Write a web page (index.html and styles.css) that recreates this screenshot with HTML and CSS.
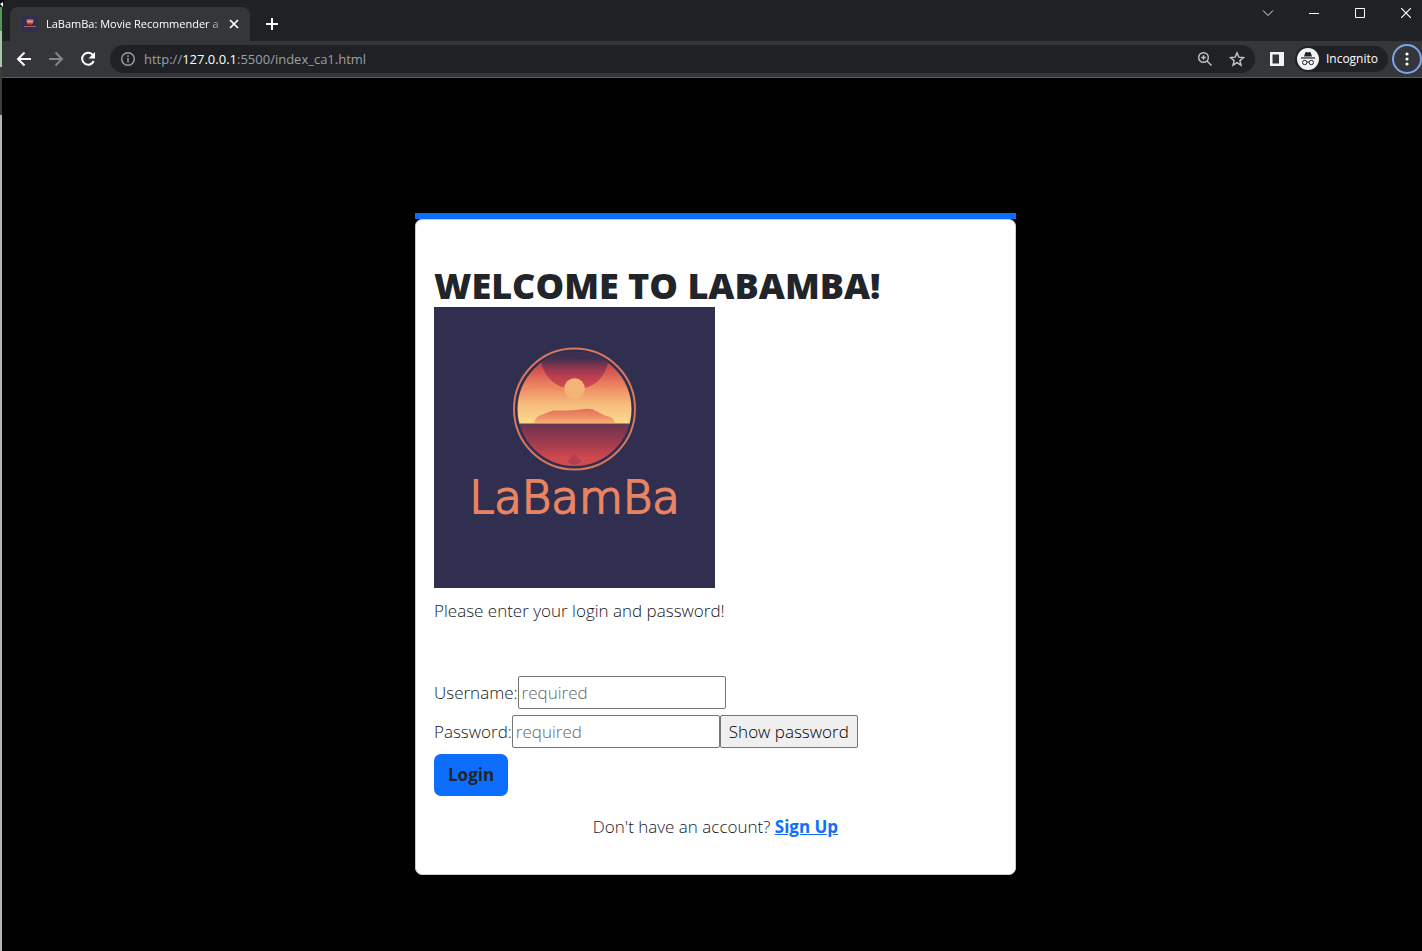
FILE: index.html
```html
<!DOCTYPE html>
<html lang="en">
<head>
<meta charset="utf-8">
<title>LaBamBa: Movie Recommender</title>
<link rel="stylesheet" href="styles.css">
</head>
<body>
<div class="desktop">
  <div class="backdrop">
    <svg class="pointer" width="4" height="8" viewBox="0 0 4 8" aria-hidden="true"><path d="M0 0h4v3H2v4H0z" fill="#000"/><path d="M0 4l3-2v5z" fill="#fff"/></svg>
  </div>
  <div class="window">
    <header class="tabstrip">
      <div class="tab">
        <svg class="favicon" width="16" height="16" viewBox="0 0 16 16" aria-hidden="true">
          <rect width="16" height="16" fill="#312f4f"/>
          <path d="M4.500 3h7v2.500q0 2-2 3h-3q-2-1-2-3z" fill="#c0444f"/>
          <path d="M5 4.500h6v2H5z" fill="#f0a070"/>
          <path d="M2 10.500h12" stroke="#a5605c"/>
        </svg>
        <span class="tab-title">LaBamBa: Movie Recommender a</span>
        <button class="tab-close" aria-label="Close tab"><svg width="10" height="10" viewBox="0 0 10 10"><path d="M1 1l8 8M9 1l-8 8" stroke="#fff" stroke-width="1.700"/></svg></button>
      </div>
      <button class="new-tab" aria-label="New tab"><svg width="12" height="12" viewBox="0 0 12 12"><path d="M6 0v12M0 6h12" stroke="#fff" stroke-width="2"/></svg></button>
      <div class="controls">
        <button aria-label="Search tabs"><svg width="12" height="12" viewBox="0 0 12 12"><path d="M1 3.500l5 5 5-5" fill="none" stroke="#e8e8e8"/></svg></button>
        <button aria-label="Minimize"><svg width="10" height="10" viewBox="0 0 10 10"><path d="M0 5.500h10" stroke="#fff"/></svg></button>
        <button aria-label="Maximize"><svg width="10" height="10" viewBox="0 0 10 10"><path d="M.5.5h9v9h-9z" fill="none" stroke="#fff"/></svg></button>
        <button aria-label="Close"><svg width="10" height="10" viewBox="0 0 10 10"><path d="M0 0l10 10M10 0L0 10" stroke="#fff" stroke-width="1.200"/></svg></button>
      </div>
    </header>
    <nav class="toolbar" aria-label="Browser toolbar">
      <button class="tool" aria-label="Back"><svg width="16" height="16" viewBox="0 0 16 16"><path d="M15 8H2M8.500 1.500L2 8l6.500 6.500" fill="none" stroke="#fff" stroke-width="2"/></svg></button>
      <button class="tool" aria-label="Forward"><svg width="16" height="16" viewBox="0 0 16 16"><path d="M1 8h13M7.500 1.500L14 8l-6.500 6.500" fill="none" stroke="#85868a" stroke-width="2"/></svg></button>
      <button class="tool" aria-label="Reload"><svg width="16" height="16" viewBox="0 0 16 16"><path d="M13 4.200A6 6 0 1 0 13.700 10" fill="none" stroke="#fff" stroke-width="2"/><path d="M15 1v6.500H8.500z" fill="#fff"/></svg></button>
      <div class="omnibox">
        <svg width="16" height="16" viewBox="0 0 16 16" aria-hidden="true"><circle cx="8" cy="8" r="6.300" fill="none" stroke="#9aa0a6" stroke-width="1.400"/><path d="M8 7v4.500M8 4.300v1.600" stroke="#9aa0a6" stroke-width="1.500"/></svg>
        <span class="address">http://<b>127.0.0.1</b>:5500/index_ca1.html</span>
        <button class="omni-button" aria-label="Zoom"><svg width="16" height="16" viewBox="0 0 16 16"><g fill="none" stroke="#c4c7c9" stroke-width="1.400"><circle cx="6.500" cy="6.500" r="4.800"/><path d="M10 10l4.500 4.500M6.500 4.200v4.600M4.200 6.500h4.600"/></g></svg></button>
        <button class="omni-button" aria-label="Bookmark this page"><svg width="16" height="16" viewBox="0 0 16 16"><path d="M8 1.800l1.800 4.300 4.700.4-3.600 3.100 1.100 4.600L8 11.700l-4 2.500 1.100-4.600L1.500 6.500l4.700-.4z" fill="none" stroke="#c4c7c9" stroke-width="1.400"/></svg></button>
      </div>
      <button class="panel" aria-label="Side panel"><svg width="14" height="14" viewBox="0 0 14 14"><path d="M0 0h14v14H0zM2.500 2.500v9H9v-9z" fill="#f1f3f4" fill-rule="evenodd"/></svg></button>
      <button class="incognito">
        <svg width="22" height="22" viewBox="0 0 22 22" aria-hidden="true"><circle cx="11" cy="11" r="11" fill="#f1f3f4"/><path d="M7 8.500l1.300-4q.3-.7 1-.4l1.700.5 1.700-.5q.7-.3 1 .4l1.300 4z" fill="#202124"/><path d="M4 10h14" stroke="#202124" stroke-width="1.200"/><g fill="none" stroke="#202124"><circle cx="7.700" cy="14.500" r="2.200"/><circle cx="14.300" cy="14.500" r="2.200"/><path d="M10 14.200q1-.6 2 0"/></g></svg>
        Incognito
      </button>
      <button class="menu" aria-label="Menu"><svg width="4" height="14" viewBox="0 0 4 14"><g fill="#fff"><circle cx="2" cy="2" r="1.600"/><circle cx="2" cy="7" r="1.600"/><circle cx="2" cy="12" r="1.600"/></g></svg></button>
    </nav>
    <main class="page">
      <section class="login">
        <div class="card">
          <h1>Welcome to LaBamBa!</h1>
          <svg class="logo" viewBox="0 0 281 281" role="img" aria-label="LaBamBa">
            <defs>
              <linearGradient id="sky" x1="0" y1="0" x2="0" y2="1"><stop offset="0" stop-color="#a83250"/><stop offset=".22" stop-color="#d04c50"/><stop offset=".5" stop-color="#ef8c62"/><stop offset=".72" stop-color="#f6bb7c"/><stop offset="1" stop-color="#fbdc8e"/></linearGradient>
              <linearGradient id="night" x1="0" y1="0" x2="0" y2="1"><stop offset="0" stop-color="#312f4f"/><stop offset=".27" stop-color="#3c304f"/><stop offset=".5" stop-color="#8c3650"/><stop offset=".7" stop-color="#b93d50"/><stop offset="1" stop-color="#d3504f"/></linearGradient>
              <linearGradient id="sea" x1="0" y1="0" x2="0" y2="1"><stop offset="0" stop-color="#6c344e"/><stop offset=".5" stop-color="#ac3d4f"/><stop offset=".75" stop-color="#d0494f"/><stop offset="1" stop-color="#cf4b50"/></linearGradient>
              <linearGradient id="hill" x1="0" y1="0" x2="0" y2="1"><stop offset="0" stop-color="#e2705a"/><stop offset=".5" stop-color="#ed8b62"/><stop offset="1" stop-color="#f5ae77"/></linearGradient>
              <clipPath id="disc"><circle cx="140.500" cy="102" r="57"/></clipPath>
            </defs>
            <rect width="281" height="281" fill="#312f4f"/>
            <g clip-path="url(#disc)">
              <rect x="80" y="45" width="121" height="72" fill="url(#sky)"/>
              <path d="M84 84q14-4 25-6 11 5 24 4M152 80q14-7 23-5 12 3 24 5" fill="none" stroke="#eb8060" stroke-opacity=".35" stroke-width="2"/>
              <path d="M80 40h121v16h-27q-5 20-23 25h-20q-18-5-24-25H80z" fill="url(#night)"/>
              <circle cx="140.500" cy="81.500" r="10.300" fill="#f5b477"/>
              <path d="M100 116q2-7 7-8l12-4.500q18 .5 31-1.500 8-1 12 2l10 5q8 1 9 7z" fill="url(#hill)"/>
              <rect x="80" y="117" width="121" height="45" fill="url(#sea)"/>
              <path d="M133 155l7.500-8 7.500 8-7.500 3z" fill="#9f3a50" opacity=".6"/>
              <path d="M80 117h121" stroke="#57444d"/>
            </g>
            <circle cx="140.500" cy="102" r="60.500" fill="none" stroke="#d9775f" stroke-width="2"/>
            <text x="140.500" y="206" text-anchor="middle" class="wordmark">LaBamBa</text>
          </svg>
          <p class="intro">Please enter your login and password!</p>
          <form>
            <div class="field"><label for="username">Username:</label><input id="username" type="text" placeholder="required"></div>
            <div class="field"><label for="password">Password:</label><input id="password" type="password" placeholder="required"><button class="show" type="button">Show password</button></div>
            <button class="submit" type="submit">Login</button>
          </form>
          <p class="signup">Don't have an account? <a href="#signup">Sign Up</a></p>
        </div>
      </section>
    </main>
  </div>
</div>
</body>
</html>
```
FILE: styles.css
```css
* { box-sizing: border-box; }
body {
  margin: 0;
  background: #000;
  color: #212529;
  font-family: "Open Sans", "Noto Sans", sans-serif;
  font-size: 17px;
  line-height: 28px;
}
button { padding: 0; border: 0; background: none; font: inherit; color: inherit; }
svg { display: block; flex: none; }

.desktop { display: flex; min-height: 100vh; overflow: hidden; }
.backdrop {
  flex: none;
  width: 2px;
  background: linear-gradient(#4f9a58 31px, #a6c9a5 31px 67px, #3c3c3c 67px 115px, #b4b4b4 115px);
}
.pointer { position: absolute; left: 0; top: 0; }
/* The window runs slightly past the right edge of the screen. */
.window { flex: 1; min-width: 0; margin-right: -7px; display: flex; flex-direction: column; }

.tabstrip { display: flex; height: 41px; padding-left: 8px; background: #202124; }
.tab {
  display: flex;
  align-items: center;
  width: 240px;
  height: 34px;
  margin-top: 7px;
  padding: 0 10px 0 12px;
  border-radius: 8px 8px 0 0;
  background: #35363a;
  color: #fff;
  font-size: 11px;
}
.tab-title {
  flex: 1;
  min-width: 0;
  margin-left: 8px;
  white-space: nowrap;
  mask-image: linear-gradient(90deg, #000 88%, transparent);
}
.tab-close { padding: 1px; }
.new-tab { align-self: flex-start; margin: 18px 0 0 16px; }
.controls { display: flex; height: 26px; margin-left: auto; }
.controls button { display: grid; place-items: center; width: 46px; }

.toolbar {
  display: flex;
  align-items: center;
  height: 37px;
  padding: 0 7px 0 6px;
  background: #35363a;
  border-bottom: 1px solid #5b5c5f;
  font-size: 12px;
}
.tool { display: grid; place-items: center; width: 32px; height: 32px; }
.omnibox {
  flex: 1;
  display: flex;
  align-items: center;
  height: 28px;
  margin-left: 6px;
  padding: 0 10px;
  border-radius: 14px;
  background: #202124;
}
.address { flex: 1; margin-left: 8px; color: #9aa0a6; font-size: 13px; }
.address b { color: #fff; font-weight: 400; }
.omni-button { margin-left: 16px; }
.panel { margin: 0 11px 0 15px; }
.incognito {
  display: flex;
  align-items: center;
  gap: 7px;
  height: 26px;
  padding: 0 10px 0 2px;
  border-radius: 13px;
  background: #202124;
  color: #fff;
}
.menu {
  display: grid;
  place-items: center;
  width: 30px;
  height: 30px;
  margin-left: 4px;
  border: 2px solid #7ba6ee;
  border-radius: 50%;
}

.page { flex: 1; padding: 135px 16px 76px; background: #000; }
.login { max-width: 601px; margin: 0 auto; border-top: 6px solid #0d6efd; }
.card {
  padding: 45px 18px 33px;
  border: 1px solid #ccc;
  border-radius: 7px;
  background: #fff;
  color: #15181b;
  font-weight: 300;
}
h1 { margin: 0; color: #212529; font-size: 36px; font-weight: 800; line-height: 42px; text-transform: uppercase; }
.logo { width: 281px; }
.wordmark { font: 200 45px "DejaVu Sans", sans-serif; fill: #e98463; stroke: #e98463; stroke-width: 2px; }
.intro { margin: 9px 0 51px; }
.field { display: flex; align-items: center; margin-bottom: 6px; }
.field input {
  width: 208px;
  height: 33px;
  padding: 1px 3px;
  border: 1px solid #767676;
  border-radius: 2px;
  font: inherit;
}
.field input::placeholder { color: #666; }
.show {
  height: 33px;
  padding: 0 8px;
  border: 1px solid #767676;
  border-radius: 2px;
  background: #efefef;
  color: #000;
}
.submit {
  height: 42px;
  padding: 0 14px;
  border-radius: 7px;
  background: #0d6efd;
  color: #212529;
  font-weight: 700;
}
.signup { margin: 17px 0 0; text-align: center; }
.signup a { color: #0d6efd; font-weight: 700; }
```
